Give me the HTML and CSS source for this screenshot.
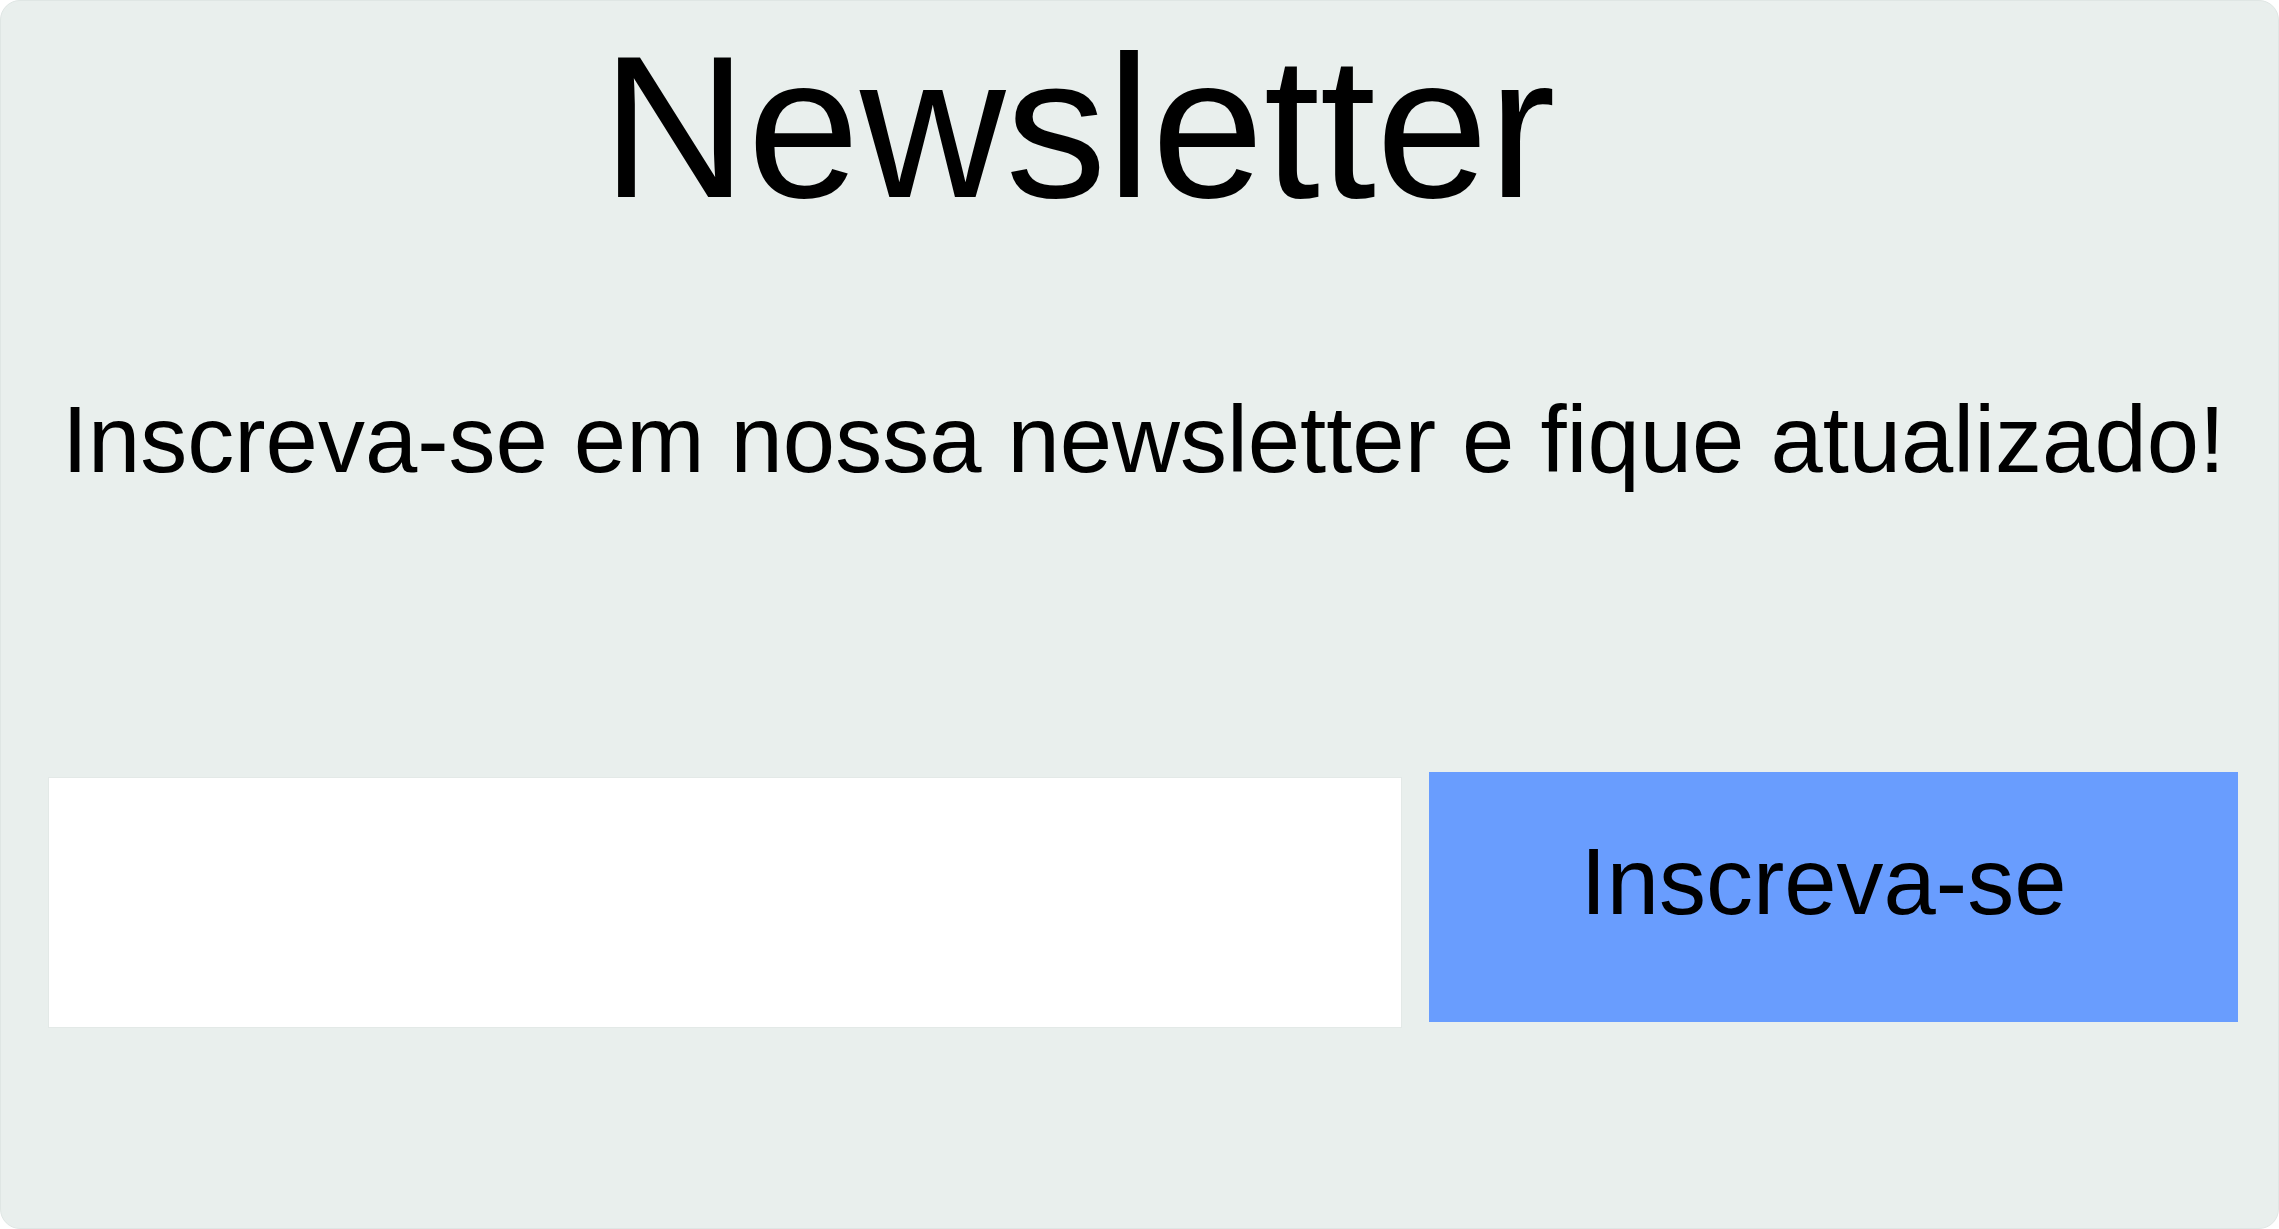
FILE: index.html
```html
<!DOCTYPE html>
<html lang="pt">
<head>
<meta charset="utf-8">
<title>Newsletter</title>
<link rel="stylesheet" href="styles.css">
</head>
<body>
<div class="card">
  <h1 class="title">Newsletter</h1>
  <p class="lead">Inscreva-se em nossa newsletter e fique atualizado!</p>
  <form class="row">
    <input class="email" type="email" aria-label="E-mail">
    <button class="btn" type="button">Inscreva-se</button>
  </form>
</div>
</body>
</html>
```

FILE: styles.css
```css
html, body {
  margin: 0;
  padding: 0;
  background: #ffffff;
}
body {
  font-family: "Liberation Sans", Arial, sans-serif;
  color: #000;
}
.card {
  box-sizing: border-box;
  width: 2279px;
  height: 1229px;
  background: #e9efed;
  border: 1px solid #dfe6e4;
  border-radius: 20px;
  padding: 25px 39px 0 47px;
  display: flex;
  flex-direction: column;
}
.title {
  margin: 0;
  font-size: 202px;
  line-height: 202px;
  font-weight: 400;
  text-align: center;
  padding-right: 130px;
}
.lead {
  margin: 165px 0 0 0;
  font-size: 94px;
  line-height: 94px;
  text-align: center;
  white-space: nowrap;
}
.row {
  margin: 285px 0 0 0;
  display: flex;
  align-items: flex-start;
  gap: 27px;
}
.email {
  box-sizing: border-box;
  width: 1354px;
  height: 251px;
  margin: 5px 0 0 0;
  background: #ffffff;
  border: 1px solid #e3e9e7;
  padding: 0;
  outline: none;
}
.btn {
  box-sizing: border-box;
  width: 809px;
  height: 250px;
  margin: 0;
  background: #699dfe;
  border: none;
  border-radius: 0;
  padding: 0 20px 30px 0;
  font-family: "Liberation Sans", Arial, sans-serif;
  font-size: 94px;
  color: #000;
  display: flex;
  align-items: center;
  justify-content: center;
}
```
